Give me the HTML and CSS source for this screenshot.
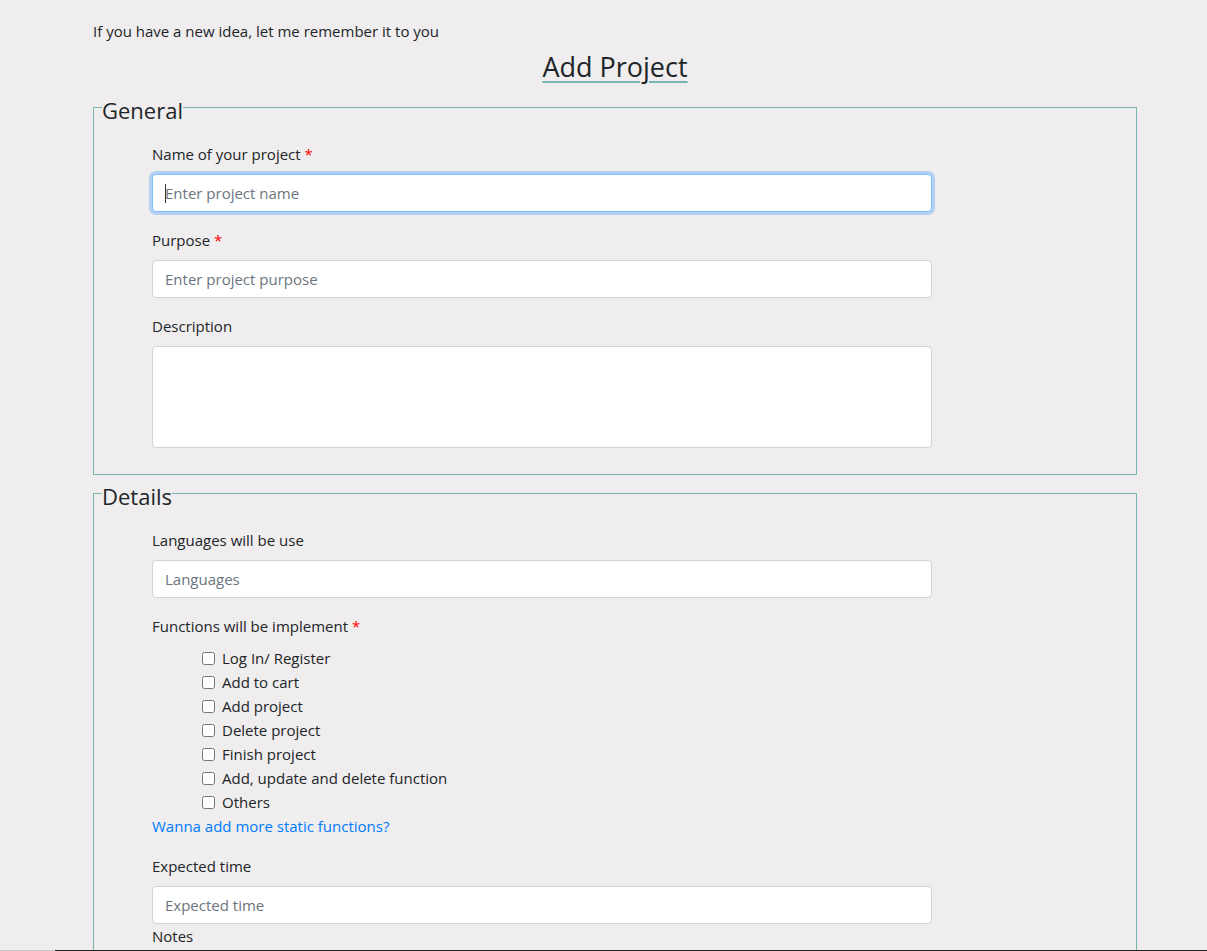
FILE: index.html
```html
<!DOCTYPE html>
<html lang="en">
<head>
<meta charset="utf-8">
<title>Add Project</title>
<link rel="stylesheet" href="styles.css">
</head>
<body>
<main class="page">
  <p class="intro">If you have a new idea, let me remember it to you</p>
  <h1 class="title"><span>Add Project</span></h1>
  <form class="form">
    <fieldset class="group">
      <legend>General</legend>
      <div class="field">
        <label>Name of your project <span class="req">*</span></label>
        <div class="input-wrap">
          <input class="control focused" type="text" placeholder="Enter project name">
          <span class="caret"></span>
        </div>
      </div>
      <div class="field">
        <label>Purpose <span class="req">*</span></label>
        <input class="control" type="text" placeholder="Enter project purpose">
      </div>
      <div class="field">
        <label>Description</label>
        <textarea class="control area"></textarea>
      </div>
    </fieldset>
    <fieldset class="group">
      <legend>Details</legend>
      <div class="field">
        <label>Languages will be use</label>
        <input class="control" type="text" placeholder="Languages">
      </div>
      <div class="field">
        <label>Functions will be implement <span class="req">*</span></label>
        <ul class="checks">
          <li><label class="check"><input type="checkbox"><span>Log In/ Register</span></label></li>
          <li><label class="check"><input type="checkbox"><span>Add to cart</span></label></li>
          <li><label class="check"><input type="checkbox"><span>Add project</span></label></li>
          <li><label class="check"><input type="checkbox"><span>Delete project</span></label></li>
          <li><label class="check"><input type="checkbox"><span>Finish project</span></label></li>
          <li><label class="check"><input type="checkbox"><span>Add, update and delete function</span></label></li>
          <li><label class="check"><input type="checkbox"><span>Others</span></label></li>
        </ul>
        <a class="more" href="#">Wanna add more static functions?</a>
      </div>
      <div class="field flush">
        <label>Expected time</label>
        <input class="control" type="text" placeholder="Expected time">
      </div>
      <div class="field">
        <label>Notes</label>
        <textarea class="control area"></textarea>
      </div>
    </fieldset>
  </form>
</main>
<div class="edge"><span class="edge-left"></span><span class="edge-right"></span></div>
</body>
</html>
```

FILE: styles.css
```css
* { box-sizing: border-box; }

html, body {
  margin: 0;
  background: #efeded;
}

body {
  font-family: "Open Sans", "Noto Sans", sans-serif;
  font-size: 15px;
  line-height: 24px;
  color: #212529;
}

.page {
  width: 1044px;
  margin-left: 93px;
  padding-top: 19px;
}

.intro {
  margin: 0;
}

.title {
  margin: 7px 0 0;
  text-align: center;
  font-size: 27px;
  font-weight: 400;
  line-height: 34px;
}

.title span {
  text-decoration: underline;
  text-decoration-color: #7ab5b3;
  text-decoration-thickness: 2px;
  text-underline-offset: 4px;
}

.form {
  margin-top: 6px;
}

.group {
  margin: 0;
  padding: 17px 58px 10px 58px;
  border: 1px solid #7ab5b3;
  min-width: 0;
}

.group + .group {
  margin-top: 1px;
}

.group legend {
  margin-left: -50px;
  padding: 6px 0 0;
  font-size: 22px;
  line-height: 29px;
  color: #212529;
}

.field {
  margin-bottom: 16px;
  width: 780px;
}

.field > label {
  display: block;
  margin-bottom: 8px;
}

.field.flush { margin-bottom: 0; }

.req { color: #ff0000; }

.input-wrap {
  position: relative;
}

.control {
  display: block;
  width: 780px;
  height: 38px;
  padding: 6px 12px;
  font: inherit;
  color: #495057;
  background: #fff;
  border: 1px solid #ced4da;
  border-radius: 4px;
  outline: none;
}

.control::placeholder { color: #6c757d; }

.control.focused {
  border-color: #80bdff;
  box-shadow: 0 0 0 3px rgba(0, 123, 255, 0.25);
}

.caret {
  position: absolute;
  left: 13px;
  top: 10px;
  width: 1px;
  height: 19px;
  background: #333;
}

.control.area {
  height: 102px;
  resize: none;
}

.checks {
  list-style: none;
  margin: 0;
  padding: 0 0 0 47px;
}

.check {
  display: flex;
  align-items: center;
  height: 24px;
}

.check input {
  margin: 0 7px 0 3px;
  width: 13px;
  height: 13px;
}

.more {
  color: #007bff;
  text-decoration: none;
}

.edge {
  position: fixed;
  left: 0;
  right: 0;
  bottom: 0;
  height: 1px;
  display: flex;
}

.edge-left { width: 55px; background: #c9c9c9; }
.edge-right { flex: 1; background: #222; }
```
